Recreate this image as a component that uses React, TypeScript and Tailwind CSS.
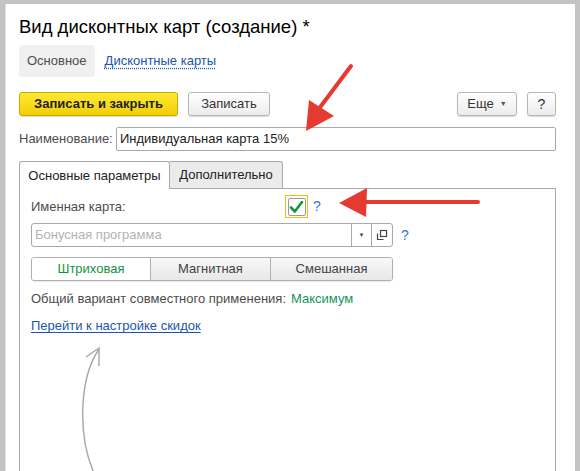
import React from "react";

const font = { fontFamily: '"Liberation Sans", Arial, sans-serif' };

const GrayButton = ({ children, className = "" }: { children: React.ReactNode; className?: string }) => (
  <button
    className={`h-[24px] rounded-[3px] border border-[#b5b5b5] bg-gradient-to-b from-white to-[#ececec] text-[13px] text-[#333] shadow-[0_1px_1px_rgba(0,0,0,0.15)] flex items-center justify-center ${className}`}
  >
    {children}
  </button>
);

const Help = ({ className = "" }: { className?: string }) => (
  <span className={`text-[14px] text-[#2b7bd0] ${className}`}>?</span>
);

export default function App() {
  return (
    <div style={font} className="w-[580px] h-[471px] overflow-hidden bg-[#c4c4c4] pt-[4px] pl-[5px] pr-[5px] relative">
      <div className="h-full bg-white pl-[13px] pr-[19px] pt-[11px] border-l border-[#e0e0e0]">
        {/* Title */}
        <div className="text-[18.5px] leading-[24px] text-black">Вид дисконтных карт (создание) *</div>

        {/* Nav */}
        <div className="mt-[6px] flex items-center h-[32px]">
          <div className="h-[32px] px-[8px] rounded-[4px] bg-[#f0f0f0] flex items-center text-[13px] text-[#4d4d4d]">
            Основное
          </div>
          <span className="ml-[10px] text-[13px] text-[#1c55ad] underline decoration-dotted underline-offset-[3px]">
            Дисконтные карты
          </span>
        </div>

        {/* Toolbar */}
        <div className="mt-[15px] flex items-center">
          <button className="h-[24px] w-[159px] rounded-[3px] border border-[#c9a900] bg-gradient-to-b from-[#ffe930] to-[#f2cf00] text-[13px] font-bold text-[#222] shadow-[0_1px_1px_rgba(0,0,0,0.15)]">
            Записать и закрыть
          </button>
          <GrayButton className="ml-[10px] w-[82px]">Записать</GrayButton>
          <div className="flex-1" />
          <GrayButton className="w-[60px] gap-[6px]">
            Еще <span className="text-[7px] text-[#555]">▼</span>
          </GrayButton>
          <GrayButton className="ml-[10px] w-[29px] text-[14px]">?</GrayButton>
        </div>

        {/* Name */}
        <div className="mt-[11px] flex items-center">
          <span className="text-[13px] text-[#4d4d4d] w-[97px]">Наименование:</span>
          <div className="flex-1 h-[24px] border border-[#a9a9a9] rounded-[2px] flex items-center px-[3px] text-[13px] text-[#222]">
            Индивидуальная карта 15%
          </div>
        </div>

        {/* Tabs */}
        <div className="mt-[10px] flex items-end h-[27px]">
          <div className="h-[28px] w-[151px] border border-b-0 border-[#a9a9a9] rounded-t-[3px] bg-white flex items-center justify-center text-[13px] text-[#222] relative z-10 -mb-px">
            Основные параметры
          </div>
          <div className="h-[27px] w-[113px] border border-l-0 border-b-0 border-[#a9a9a9] rounded-tr-[3px] bg-[#ebebeb] flex items-center justify-center text-[13px] text-[#222]">
            Дополнительно
          </div>
        </div>

        {/* Panel */}
        <div className="border border-[#a9a9a9] h-[320px] pl-[11px] pt-[6px]">
          <div className="flex items-center h-[23px]">
            <span className="text-[13px] text-[#4d4d4d] w-[254px]">Именная карта:</span>
            <div className="w-[23px] h-[23px] border border-[#f2c200] flex items-center justify-center">
              <div className="w-[18px] h-[18px] border border-[#9a9a9a] rounded-[2px] flex items-center justify-center bg-white">
                <svg width="15" height="14" viewBox="0 0 15 14">
                  <path d="M2 7.5 L5.8 11.5 L13 2" fill="none" stroke="#13953c" strokeWidth="2.6" strokeLinecap="round" strokeLinejoin="round" />
                </svg>
              </div>
            </div>
            <Help className="ml-[5px]" />
          </div>

          <div className="mt-[5px] flex items-center">
            <div className="w-[362px] h-[24px] border border-[#a9a9a9] rounded-[3px] flex">
              <div className="flex-1 flex items-center px-[3px] text-[13px] text-[#b3b3b3]">Бонусная программа</div>
              <div className="w-[20px] border-l border-[#a9a9a9] flex items-center justify-center">
                <span className="text-[6px] text-[#444]">▼</span>
              </div>
              <div className="w-[21px] border-l border-[#a9a9a9] flex items-center justify-center">
                <svg width="12" height="12" viewBox="0 0 12 12">
                  <path d="M1.5 4.5 V10.5 H7.5" fill="none" stroke="#444" strokeWidth="1.2" />
                  <rect x="4.5" y="1.5" width="6" height="6" fill="none" stroke="#444" strokeWidth="1.2" />
                </svg>
              </div>
            </div>
            <Help className="ml-[8px]" />
          </div>

          <div className="mt-[10px] w-[362px] h-[24px] border border-[#b0b0b0] rounded-[3px] flex text-[13px] overflow-hidden shadow-[0_1px_1px_rgba(0,0,0,0.08)]">
            <div className="w-[118px] bg-white flex items-center justify-center text-[#13953c]">Штриховая</div>
            <div className="w-[120px] border-l border-[#b0b0b0] bg-gradient-to-b from-[#f8f8f8] to-[#e8e8e8] flex items-center justify-center text-[#444]">
              Магнитная
            </div>
            <div className="flex-1 border-l border-[#b0b0b0] bg-gradient-to-b from-[#f8f8f8] to-[#e8e8e8] flex items-center justify-center text-[#444]">
              Смешанная
            </div>
          </div>

          <div className="mt-[9px] h-[18px] flex items-center text-[13px] text-[#4d4d4d]">
            Общий вариант совместного применения:<span className="ml-[5px] text-[#13955a]">Максимум</span>
          </div>

          <div className="mt-[9px] h-[18px] flex items-center text-[13px]">
            <span className="text-[#1c55ad] underline underline-offset-[2px]">Перейти к настройке скидок</span>
          </div>
        </div>
      </div>

      {/* Annotations */}
      <svg className="absolute inset-0 pointer-events-none" width="580" height="471" viewBox="0 0 580 471">
        <line x1="351" y1="66" x2="318" y2="110" stroke="#e53a2f" strokeWidth="4" strokeLinecap="round" />
        <polygon points="306,131 309,100 334,116" fill="#e53a2f" />
        <line x1="478" y1="202" x2="362" y2="202" stroke="#e53a2f" strokeWidth="4" strokeLinecap="round" />
        <polygon points="339,203 367,188 366,217" fill="#e53a2f" />
        <path d="M95 475 C 78 440, 78 380, 99 349" fill="none" stroke="#a6a6a6" strokeWidth="1.4" />
        <path d="M86 357 L99 348 L99 366" fill="none" stroke="#a6a6a6" strokeWidth="1.4" />
      </svg>
    </div>
  );
}
